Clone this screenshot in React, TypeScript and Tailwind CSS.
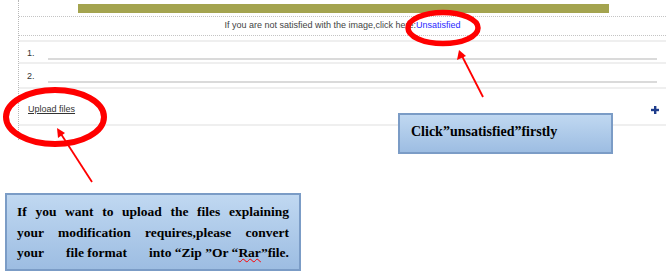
import React from "react";

const sans = { fontFamily: '"Liberation Sans", Arial, sans-serif' };
const serif = { fontFamily: '"Liberation Serif", "Times New Roman", serif' };

function Rule() {
  return <div className="h-[2px] bg-[#efefef]" />;
}

function NumberedRow({ n }: { n: number }) {
  return (
    <div className="relative h-[20px]">
      <span className="absolute left-[8px] top-[5px] text-[9px] text-[#333]">{n}.</span>
      <div className="absolute left-[29px] right-[9px] bottom-[2px] h-[2px] bg-[#dadada]" />
    </div>
  );
}

export default function App() {
  return (
    <div className="relative w-[666px] h-[276px] overflow-hidden bg-white" style={sans}>
      {/* form panel */}
      <div className="ml-[18px] pb-[14px] border-l border-dotted border-[#b8b8b8]">
        <div className="h-[16px] pt-[4px]">
          <div className="ml-[59px] w-[531px] h-[9px] bg-[#a4a44f]" />
        </div>
        <div className="h-[20px] border-t border-b border-dotted border-[#c4c4c4] flex items-center justify-center text-[9px] text-[#444]">
          <span>
            If you are not satisfied with the image,click here:<span className="text-[#2a2aff]">Unsatisfied</span>
          </span>
        </div>
        <div className="h-[4px]" />
        <Rule />
        <NumberedRow n={1} />
        <Rule />
        <div className="h-[1px]" />
        <NumberedRow n={2} />
        <div className="h-[2px]" />
        <Rule />
        <div className="h-[35px] flex items-center justify-between pl-[9px] pr-[7px] pt-[7px]">
          <span className="text-[9px] text-[#333] underline underline-offset-[1px]">Upload files</span>
          <svg width="8" height="8" viewBox="0 0 8 8">
            <rect x="3" y="0" width="2.4" height="8" fill="#1f3d8c" />
            <rect x="0" y="2.8" width="8" height="2.4" fill="#1f3d8c" />
          </svg>
        </div>
        <Rule />
      </div>

      {/* annotations */}
      <svg className="absolute inset-0 pointer-events-none" width="666" height="276">
        <ellipse cx="443" cy="28" rx="35" ry="15.5" fill="none" stroke="#ff0000" strokeWidth="5.5" />
        <line x1="483" y1="97" x2="462" y2="56" stroke="#ff0000" strokeWidth="1.8" />
        <polygon points="459,50 457,60 466,56" fill="#ff0000" />
        <ellipse cx="55" cy="117" rx="49" ry="27" fill="none" stroke="#ff0000" strokeWidth="6" />
        <line x1="92" y1="182" x2="61" y2="134" stroke="#ff0000" strokeWidth="1.8" />
        <polygon points="57,128 58,138 65,133" fill="#ff0000" />
      </svg>

      <div
        className="absolute left-[398px] top-[113px] w-[215px] h-[41px] border-2 border-[#7b9cc6] bg-gradient-to-b from-[#c0d8f1] to-[#9dbde2] pl-[11px] pt-[6px] text-[14px] font-bold text-black"
        style={serif}
      >
        Click”unsatisfied”firstly
      </div>

      <div
        className="absolute left-[5px] top-[193px] w-[296px] h-[78px] border-2 border-[#7b9cc6] bg-gradient-to-b from-[#c0d8f1] to-[#9dbde2] pl-[10px] pr-[10px] pt-[7px] text-[13.5px] leading-[20.5px] font-bold text-black"
        style={serif}
      >
        <div className="text-justify [text-align-last:justify]">If you want to upload the files explaining</div>
        <div className="text-justify [text-align-last:justify]">your modification requires,please convert</div>
        <div className="flex justify-between">
          <span>your</span>
          <span>file format</span>
          <span>
            into “Zip ”Or “<span className="underline decoration-wavy decoration-[#ff0000] decoration-[1px]">Rar</span>”file.
          </span>
        </div>
      </div>
    </div>
  );
}
